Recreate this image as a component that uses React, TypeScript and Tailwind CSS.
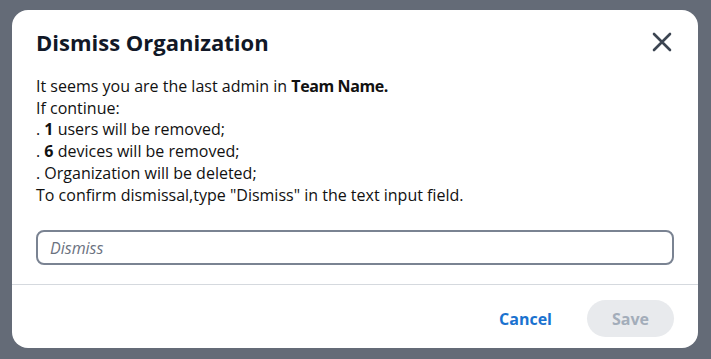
import React from "react";

function CloseIcon() {
  return (
    <svg width="20" height="20" viewBox="0 0 20 20" fill="none">
      <path d="M2 2L18 18M18 2L2 18" stroke="#3c4552" strokeWidth="2.6" strokeLinecap="round" />
    </svg>
  );
}

export default function App() {
  return (
    <div className="w-[711px] h-[359px] bg-[#646b77] pt-[10px] pl-[12px] font-['Open_Sans',sans-serif]">
      <div className="w-[686px] h-[338px] bg-white rounded-[16px] flex flex-col">
        <div className="flex items-center justify-between px-6 pt-[18px]">
          <h1 className="text-[22px] leading-[28px] font-bold text-[#111827]">Dismiss Organization</h1>
          <button className="mr-[2px]">
            <CloseIcon />
          </button>
        </div>

        <div className="px-6 pt-[20px] text-[16px] leading-[21.7px] text-[#111111]">
          <p>
            It seems you are the last admin in <b className="tracking-[-0.4px]">Team Name.</b>
          </p>
          <p>If continue:</p>
          <p>
            . <b>1</b> users will be removed;
          </p>
          <p>
            . <b>6</b> devices will be removed;
          </p>
          <p>. Organization will be deleted;</p>
          <p>To confirm dismissal,type "Dismiss" in the text input field.</p>
        </div>

        <div className="px-6 pt-[24px] pb-[19px] border-b border-[#d5d9de]">
          <input
            placeholder="Dismiss"
            className="w-full h-[35px] rounded-[8px] border-2 border-[#7a8392] px-[12px] text-[16px] italic placeholder:text-[#6b7280] outline-none"
          />
        </div>

        <div className="flex items-center justify-end gap-[35px] px-6 pt-[15px]">
          <button className="text-[16px] font-bold text-[#1a72cf]">Cancel</button>
          <button className="w-[87px] h-[37px] rounded-full bg-[#e8eaed] text-[16px] font-bold text-[#a3adba]">Save</button>
        </div>
      </div>
    </div>
  );
}
